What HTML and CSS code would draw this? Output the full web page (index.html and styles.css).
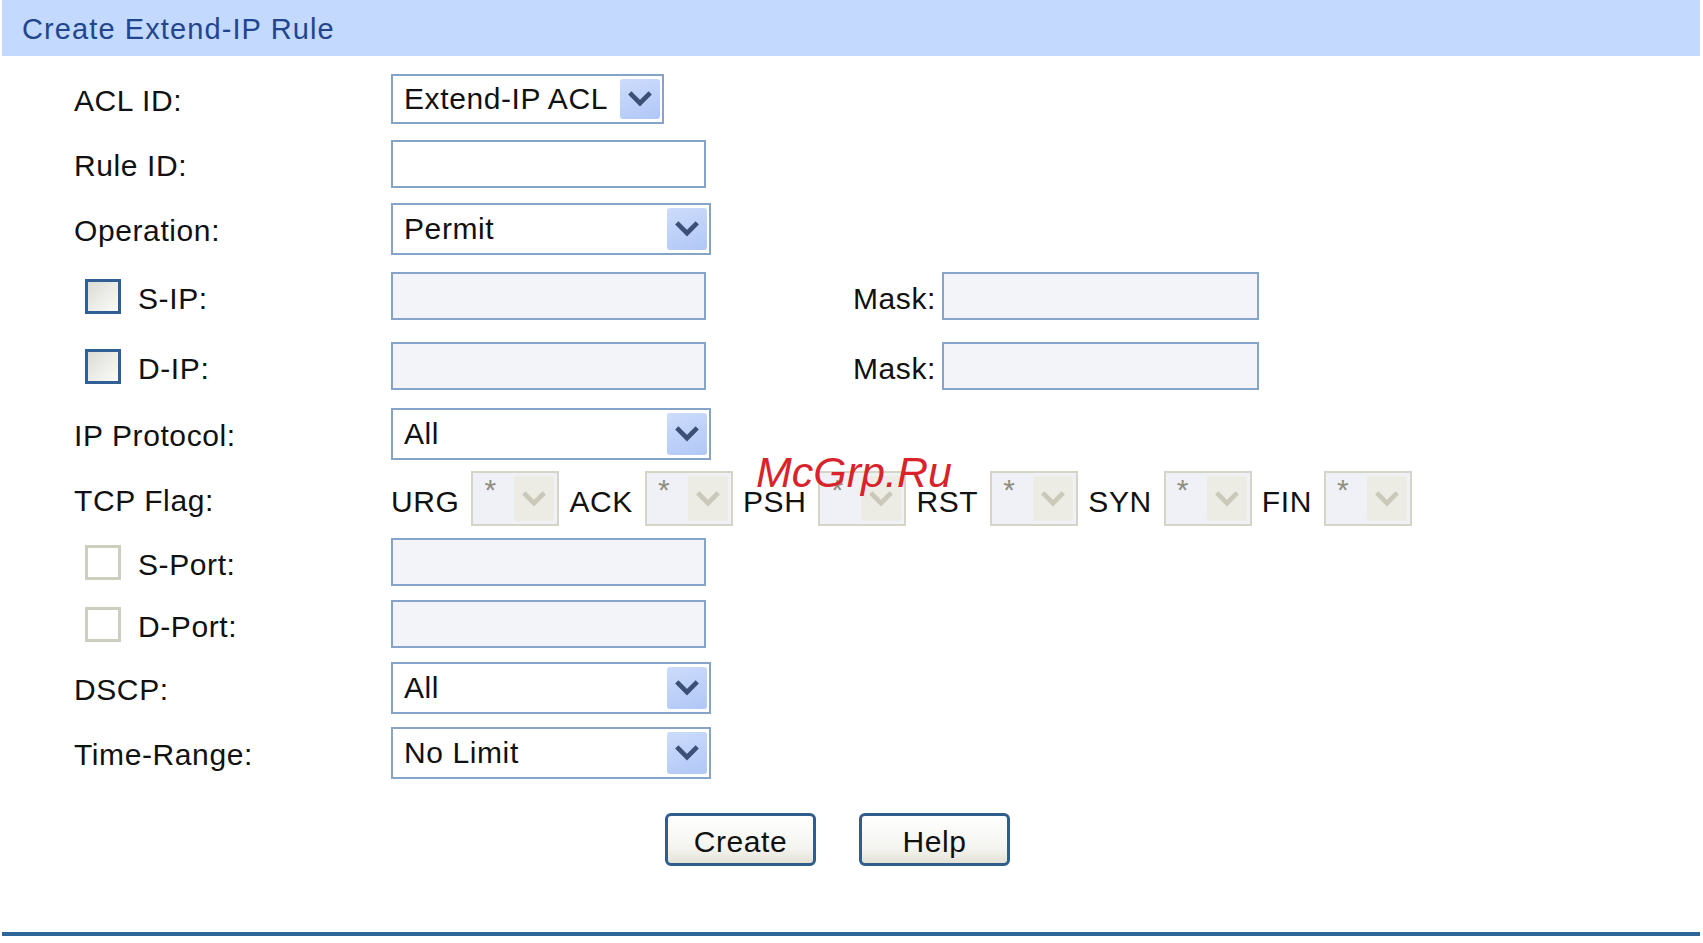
FILE: index.html
```html
<!DOCTYPE html>
<html lang="en">
<head>
  <meta charset="UTF-8">
  <title>Create Extend-IP Rule</title>
  <link rel="stylesheet" href="styles.css">
</head>
<body>
  <div class="page">
    <div class="title-bar">Create Extend-IP Rule</div>

    <form class="rule-form">
      <div class="row">
        <label class="lbl">ACL ID:</label>
        <div class="select sel-acl">
          <span class="sel-text">Extend-IP ACL</span>
          <span class="sel-btn"><svg viewBox="0 0 28 18"><polyline points="3,3 14,14 25,3"/></svg></span>
        </div>
      </div>

      <div class="row">
        <label class="lbl">Rule ID:</label>
        <input class="field field-white" type="text">
      </div>

      <div class="row">
        <label class="lbl">Operation:</label>
        <div class="select sel-wide">
          <span class="sel-text">Permit</span>
          <span class="sel-btn"><svg viewBox="0 0 28 18"><polyline points="3,3 14,14 25,3"/></svg></span>
        </div>
      </div>

      <div class="row tall">
        <label class="lbl"><span class="check"></span>S-IP:</label>
        <input class="field" type="text">
        <span class="mask-lbl">Mask:</span>
        <input class="field field-mask" type="text">
      </div>

      <div class="row tall">
        <label class="lbl"><span class="check"></span>D-IP:</label>
        <input class="field" type="text">
        <span class="mask-lbl">Mask:</span>
        <input class="field field-mask" type="text">
      </div>

      <div class="row">
        <label class="lbl">IP Protocol:</label>
        <div class="select sel-wide">
          <span class="sel-text">All</span>
          <span class="sel-btn"><svg viewBox="0 0 28 18"><polyline points="3,3 14,14 25,3"/></svg></span>
        </div>
      </div>

      <div class="row">
        <label class="lbl">TCP Flag:</label>
        <div class="flags">
          <span class="flag-name">URG</span>
          <div class="mini-select"><span class="mini-text">*</span><span class="mini-btn"><svg viewBox="0 0 28 18"><polyline points="3,3 14,14 25,3"/></svg></span></div>
          <span class="flag-name">ACK</span>
          <div class="mini-select"><span class="mini-text">*</span><span class="mini-btn"><svg viewBox="0 0 28 18"><polyline points="3,3 14,14 25,3"/></svg></span></div>
          <span class="flag-name">PSH</span>
          <div class="mini-select"><span class="mini-text">*</span><span class="mini-btn"><svg viewBox="0 0 28 18"><polyline points="3,3 14,14 25,3"/></svg></span></div>
          <span class="flag-name">RST</span>
          <div class="mini-select"><span class="mini-text">*</span><span class="mini-btn"><svg viewBox="0 0 28 18"><polyline points="3,3 14,14 25,3"/></svg></span></div>
          <span class="flag-name">SYN</span>
          <div class="mini-select"><span class="mini-text">*</span><span class="mini-btn"><svg viewBox="0 0 28 18"><polyline points="3,3 14,14 25,3"/></svg></span></div>
          <span class="flag-name">FIN</span>
          <div class="mini-select"><span class="mini-text">*</span><span class="mini-btn"><svg viewBox="0 0 28 18"><polyline points="3,3 14,14 25,3"/></svg></span></div>
        </div>
      </div>

      <div class="row short">
        <label class="lbl"><span class="check check-off"></span>S-Port:</label>
        <input class="field" type="text">
      </div>

      <div class="row short">
        <label class="lbl"><span class="check check-off"></span>D-Port:</label>
        <input class="field" type="text">
      </div>

      <div class="row">
        <label class="lbl">DSCP:</label>
        <div class="select sel-wide">
          <span class="sel-text">All</span>
          <span class="sel-btn"><svg viewBox="0 0 28 18"><polyline points="3,3 14,14 25,3"/></svg></span>
        </div>
      </div>

      <div class="row">
        <label class="lbl">Time-Range:</label>
        <div class="select sel-wide">
          <span class="sel-text">No Limit</span>
          <span class="sel-btn"><svg viewBox="0 0 28 18"><polyline points="3,3 14,14 25,3"/></svg></span>
        </div>
      </div>

      <div class="buttons">
        <button type="button" class="btn">Create</button>
        <button type="button" class="btn">Help</button>
      </div>
    </form>

    <div class="footer-line"></div>

    <div class="watermark">McGrp.Ru</div>
  </div>
</body>
</html>
```

FILE: styles.css
```css
/* Basic styles */
body {
  margin: 0;
  padding: 0;
  background: #fff;
  font-family: "Liberation Sans", Arial, sans-serif;
  font-size: 30px;
  letter-spacing: 0.6px;
  color: #111;
}
.page {
  position: relative;
  padding: 0 3px 0 2px;
}
.title-bar {
  height: 56px;
  background-color: #c3d9fd;
  color: #22468e;
  padding-left: 20px;
  line-height: 58px;
  font-size: 29px;
  letter-spacing: 1.1px;
}
.rule-form {
  padding: 10px 0 0 72px;
}
.row {
  display: flex;
  align-items: center;
  height: 65px;
}
.row.tall {
  height: 70px;
}
.row.short {
  height: 62px;
}
.lbl {
  display: flex;
  align-items: center;
  width: 317px;
  flex-shrink: 0;
  padding-top: 5px;
}
.check {
  width: 36px;
  height: 35px;
  box-sizing: border-box;
  margin: -5px 17px 0 11px;
  border: 3px solid #2f5f95;
  background: linear-gradient(135deg, #dcdcd6, #fbfbf9);
}
.check.check-off {
  border-color: #cdcdc0;
  background: #fff;
}

/* text fields */
.field {
  box-sizing: border-box;
  width: 315px;
  height: 48px;
  margin: 0;
  border: 2px solid #86a3c8;
  background: #f3f4f9;
  font: inherit;
}
.field-white {
  background: #fff;
}
.mask-lbl {
  margin-left: 147px;
  margin-right: 6px;
  padding-top: 5px;
}
.field-mask {
  width: 317px;
}

/* drop-downs */
.select {
  box-sizing: border-box;
  display: flex;
  align-items: center;
  justify-content: space-between;
  height: 52px;
  border: 2px solid #86a3c8;
  background: #fff;
  padding: 0 2px 0 11px;
}
.sel-acl {
  width: 273px;
  height: 50px;
}
.sel-wide {
  width: 320px;
}
.sel-btn {
  display: flex;
  align-items: center;
  justify-content: center;
  width: 40px;
  height: calc(100% - 6px);
  border-radius: 3px;
  background: linear-gradient(160deg, #cddcfc, #b0c7f6);
}
.sel-btn svg {
  width: 26px;
  height: 17px;
}
.sel-btn polyline {
  fill: none;
  stroke: #3c4f76;
  stroke-width: 5;
}

/* tcp flags */
.flags {
  display: flex;
  align-items: center;
}
.flag-name {
  margin-right: 12px;
  padding-top: 6px;
}
.mini-select {
  box-sizing: border-box;
  display: flex;
  width: 88px;
  height: 55px;
  margin-right: 10px;
  border: 2px solid #d6d4c6;
  background: #eff1f7;
  padding: 3px;
}
.mini-text {
  flex: 1;
  color: #8f8e80;
  font-size: 30px;
  line-height: 28px;
  padding-left: 8px;
}
.mini-btn {
  display: flex;
  align-items: center;
  justify-content: center;
  width: 40px;
  border-radius: 3px;
  background: #ecebe4;
}
.mini-btn svg {
  width: 26px;
  height: 17px;
}
.mini-btn polyline {
  fill: none;
  stroke: #cac8b9;
  stroke-width: 5;
}

/* buttons */
.buttons {
  display: flex;
  gap: 43px;
  padding: 28px 0 0 591px;
}
.btn {
  box-sizing: border-box;
  width: 151px;
  height: 53px;
  border: 3px solid #2f5d8c;
  border-radius: 6px;
  background: linear-gradient(#ffffff, #f3f3ef 70%, #e4e2d6);
  font: inherit;
  letter-spacing: 0.6px;
  color: #111;
  padding: 4px 0 0;
}

.footer-line {
  height: 4px;
  margin-top: 66px;
  background-color: #2e6697;
}

/* watermark over the form */
.watermark {
  position: absolute;
  left: 756px;
  top: 448px;
  color: #d9232b;
  font-style: italic;
  font-size: 43px;
  letter-spacing: 0;
}
```
